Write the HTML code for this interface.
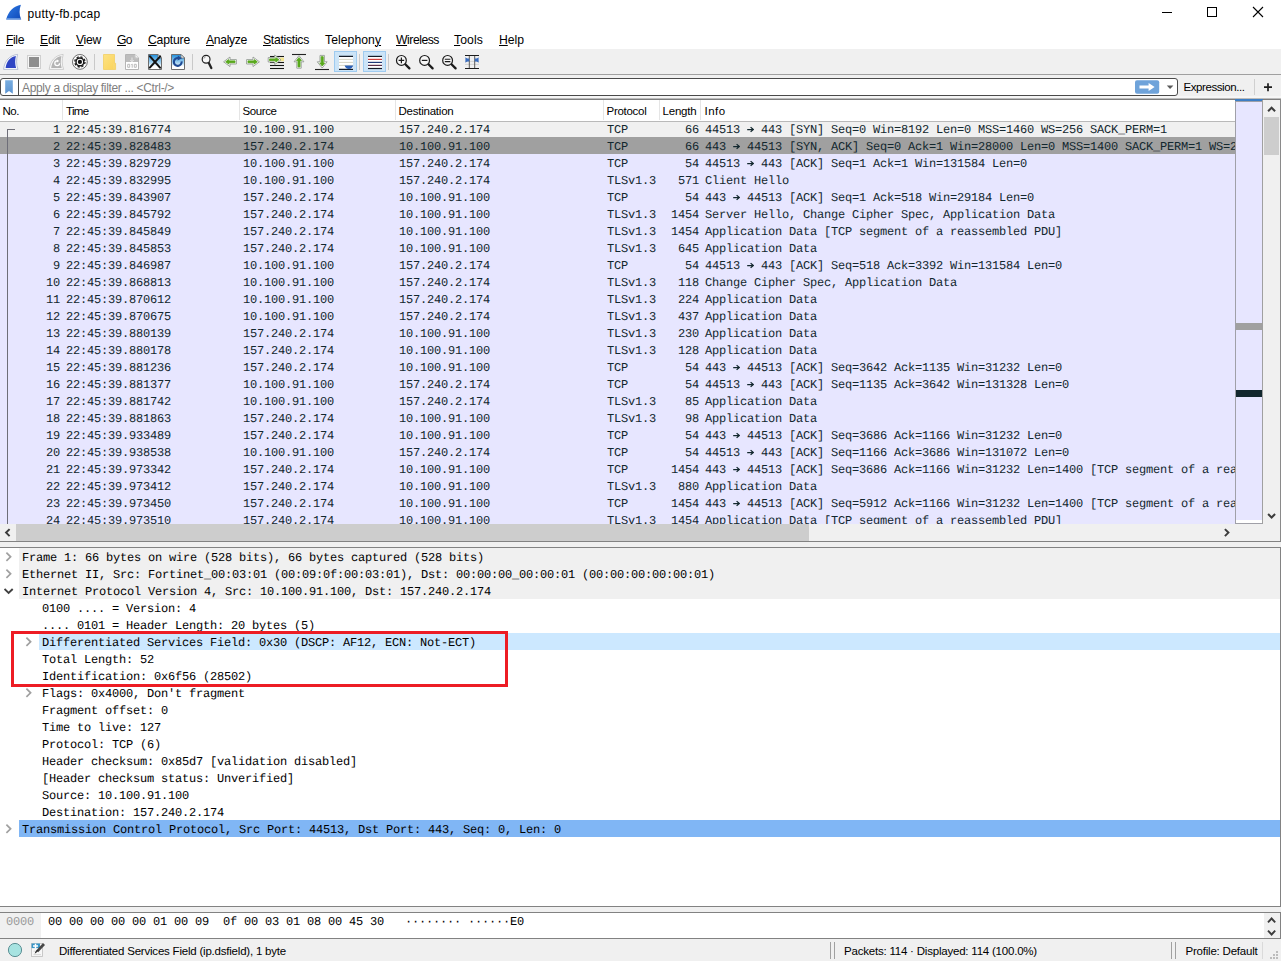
<!DOCTYPE html>
<html><head><meta charset="utf-8"><title>putty-fb.pcap</title><style>
html,body{margin:0;padding:0;background:#fff;}
body{width:1281px;height:961px;position:relative;overflow:hidden;font-family:"Liberation Sans",sans-serif;}
div,svg.a,span.c{position:absolute;}
.t{white-space:pre;font-family:"Liberation Sans",sans-serif;}
.t u{text-decoration:underline;text-underline-offset:1px;}
.r{left:0;width:1236px;height:17px;font-family:"Liberation Mono",monospace;font-size:12px;letter-spacing:-0.2px;line-height:16px;text-rendering:geometricPrecision;color:#12272e;white-space:pre;}
.r.sel{background:#f0f0f0;}
.r.syn{background:#a0a0a0;}
.c{top:2px;white-space:pre;}
.ar{display:inline-block;vertical-align:top;letter-spacing:0;margin-right:0;}
.m{font-family:"Liberation Mono",monospace;font-size:12px;letter-spacing:-0.2px;line-height:16px;height:16px;text-rendering:geometricPrecision;color:#000;white-space:pre;}
</style></head><body>
<div style="left:0px;top:0px;width:1281px;height:27px;background:#fff;"></div>
<div class="t" style="left:27.5px;top:5.5px;line-height:16px;font-size:12px;color:#000;letter-spacing:0.279px;">putty-fb.pcap</div>
<svg class="a" style="left:1160px;top:4px" width="110" height="18" viewBox="0 0 110 18"><path d="M2 8.5H12" stroke="#000" stroke-width="1"/><rect x="47.5" y="3.5" width="9" height="9" fill="none" stroke="#000" stroke-width="1"/><path d="M93 3L103 13M103 3L93 13" stroke="#000" stroke-width="1.1"/></svg>
<svg class="a" style="left:4px;top:3px" width="20" height="19" viewBox="4 3 20 19"><defs><linearGradient id="gfin" x1="0" y1="0" x2="1" y2="1"><stop offset="0" stop-color="#2e7be6"/><stop offset="1" stop-color="#0f49b8"/></linearGradient></defs><path d="M20.9 4.8C13.8 6.2 8.2 11.3 6.2 19.6H21.2C19 14.6 19.2 9.4 20.9 4.8Z" fill="url(#gfin)"/><path d="M6.6 18.2L6.2 19.6H21.2L20.6 18.2Z" fill="#7aa6e4"/></svg>
<div style="left:0px;top:27px;width:1281px;height:22px;background:#fff;"></div>
<div class="t" style="left:6px;top:31.5px;line-height:16px;font-size:12.2px;color:#000;letter-spacing:-0.410px;"><u>F</u>ile</div>
<div class="t" style="left:40px;top:31.5px;line-height:16px;font-size:12.2px;color:#000;letter-spacing:-0.254px;"><u>E</u>dit</div>
<div class="t" style="left:76px;top:31.5px;line-height:16px;font-size:12.2px;color:#000;letter-spacing:-0.301px;"><u>V</u>iew</div>
<div class="t" style="left:117px;top:31.5px;line-height:16px;font-size:12.2px;color:#000;letter-spacing:-0.633px;"><u>G</u>o</div>
<div class="t" style="left:148px;top:31.5px;line-height:16px;font-size:12.2px;color:#000;letter-spacing:-0.194px;"><u>C</u>apture</div>
<div class="t" style="left:206px;top:31.5px;line-height:16px;font-size:12.2px;color:#000;letter-spacing:-0.337px;"><u>A</u>nalyze</div>
<div class="t" style="left:263px;top:31.5px;line-height:16px;font-size:12.2px;color:#000;letter-spacing:-0.277px;"><u>S</u>tatistics</div>
<div class="t" style="left:325px;top:31.5px;line-height:16px;font-size:12.2px;color:#000;letter-spacing:0.049px;">Telephon<u>y</u></div>
<div class="t" style="left:396px;top:31.5px;line-height:16px;font-size:12.2px;color:#000;letter-spacing:-0.467px;"><u>W</u>ireless</div>
<div class="t" style="left:454px;top:31.5px;line-height:16px;font-size:12.2px;color:#000;letter-spacing:0.109px;"><u>T</u>ools</div>
<div class="t" style="left:499px;top:31.5px;line-height:16px;font-size:12.2px;color:#000;letter-spacing:-0.020px;"><u>H</u>elp</div>
<div style="left:0px;top:49px;width:1281px;height:25px;background:#f0f0f0;"></div>
<div style="left:0px;top:74px;width:1281px;height:1px;background:#a0a0a0;"></div>
<div style="left:0px;top:75px;width:1281px;height:23px;background:#f0f0f0;"></div>
<svg class="a" style="left:0;top:50px" width="500" height="25" viewBox="0 50 500 25"><defs><linearGradient id="gsky" x1="0" y1="0" x2="0" y2="1"><stop offset="0" stop-color="#1d8ddb"/><stop offset="0.6" stop-color="#b5dbf3"/><stop offset="0.78" stop-color="#fff"/></linearGradient><linearGradient id="ggrn" x1="0" y1="0" x2="0" y2="1"><stop offset="0" stop-color="#7cc23a"/><stop offset="1" stop-color="#3f8f0c"/></linearGradient><linearGradient id="gfld" x1="0" y1="0" x2="1" y2="1"><stop offset="0" stop-color="#fde283"/><stop offset="1" stop-color="#fad35a"/></linearGradient></defs><rect x="334.5" y="51.5" width="22" height="20" fill="#cce4f7" stroke="#9fcbf0"/><rect x="363.5" y="51.5" width="22" height="20" fill="#cce4f7" stroke="#9fcbf0"/><path d="M94.5 54V70" stroke="#c9c9c9" stroke-width="1"/><path d="M192.5 54V70" stroke="#c9c9c9" stroke-width="1"/><path d="M359.5 54V70" stroke="#c9c9c9" stroke-width="1"/><path d="M388.5 54V70" stroke="#c9c9c9" stroke-width="1"/><path d="M17.6 54.4C9.6 55.2 4.4 61 3.6 69.4H18C16.2 64.6 16.2 59.4 17.6 54.4Z" fill="#fbfcff" stroke="#aab2cc" stroke-width="0.8"/><path d="M15.9 56C10.4 56.9 6.4 61.4 5.6 68H16.1C14.9 64 14.9 60 15.9 56Z" fill="#2f45c4"/><rect x="27.5" y="55.5" width="13" height="13" fill="#f6f6f6" stroke="#cfcfcf"/><rect x="29" y="57" width="10" height="10" fill="#8e8e8e"/><g transform="translate(45.6 0)"><path d="M17.6 54.4C9.6 55.2 4.4 61 3.6 69.4H18C16.2 64.6 16.2 59.4 17.6 54.4Z" fill="#f8f8f8" stroke="#c4c4c4" stroke-width="0.8"/><path d="M15.9 56C10.4 56.9 6.4 61.4 5.6 68H16.1C14.9 64 14.9 60 15.9 56Z" fill="#b4b4b4"/><path d="M14 63.3A2.4 2.4 0 1 1 11.6 60.9" fill="none" stroke="#fff" stroke-width="1.3"/><path d="M11.2 59.3L13.6 60.9L11.2 62.5Z" fill="#fff"/></g><circle cx="79.9" cy="61.9" r="7.4" fill="#fff" stroke="#4a4a4a" stroke-width="0.8"/><circle cx="79.9" cy="61.9" r="5.1" fill="none" stroke="#1a1a1a" stroke-width="1.3" stroke-dasharray="2.2 1.8"/><circle cx="79.9" cy="61.9" r="3.9" fill="#fff" stroke="#1a1a1a" stroke-width="1.5"/><circle cx="79.9" cy="61.9" r="2.1" fill="#111"/><path d="M103.5 54.5H114.5V63.3H115.6V69.5H103.5Z" fill="url(#gfld)" stroke="#f3cf63" stroke-width="0.8"/><path d="M114 63.5V69.3" stroke="#f6dc86" stroke-width="0.8"/><path d="M125.5 54.5H135L138.5 58V69.5H125.5Z" fill="#fff" stroke="#b5b5b5"/><path d="M126 55H134.8V58.2H138V62H126Z" fill="#bdbdbd"/><path d="M135 54.5V58H138.5" fill="#f4f4f4" stroke="#b5b5b5" stroke-width="0.8"/><path d="M132 57.5V61.5M130.3 60L132 61.8L133.7 60" stroke="#e8e8e8" stroke-width="1" fill="none"/><path d="M127.7 64.3H129.7V67.3H127.7ZM134.3 64.3H136.3V67.3H134.3Z" fill="none" stroke="#b4b4b4" stroke-width="0.9"/><path d="M131.3 64.6L132.2 64V67.8" fill="none" stroke="#b4b4b4" stroke-width="0.9"/><path d="M148.5 54.5H158L161.5 58V69.5H148.5Z" fill="url(#gsky)" stroke="#6d6d6d"/><path d="M158 54.5V58H161.5Z" fill="#fff" stroke="#6d6d6d" stroke-width="0.8"/><path d="M150 56.4L160 67.6M160.2 56.4L149.8 67.6" stroke="#141414" stroke-width="2.1" stroke-linecap="round"/><path d="M171.5 54.5H181L184.5 58V69.5H171.5Z" fill="url(#gsky)" stroke="#6d6d6d"/><path d="M181 54.5V58H184.5Z" fill="#fff" stroke="#6d6d6d" stroke-width="0.8"/><path d="M181.6 61.3A3.9 3.9 0 1 1 178.4 58.1" fill="none" stroke="#1e4a94" stroke-width="2.1"/><path d="M177.8 55.6L182 58.3L177.6 60.6Z" fill="#1e4a94"/><path d="M208.6 62.6L211.3 68" stroke="#222" stroke-width="2.3" stroke-linecap="round"/><circle cx="206.1" cy="59.2" r="3.9" fill="#f8f8f8" stroke="#222" stroke-width="1.2"/><path d="M203.9 58.6A2.3 2.3 0 0 1 205.6 56.9" stroke="#777" stroke-width="0.8" fill="none"/><g transform="translate(237 0) scale(-1 1)"><path d="M0.6 59.6H7V57L13.4 61.8L7 66.6V64H0.6Z" fill="#ffffff" stroke="#8e968e" stroke-width="0.85" stroke-linejoin="round"/><path d="M2 60.9H8.2V59.6L11.3 61.8L8.2 64V62.7H2Z" fill="#58a81c" stroke="#58a81c" stroke-width="0.9" stroke-linejoin="round"/></g><g transform="translate(246 0)"><path d="M0.6 59.6H7V57L13.4 61.8L7 66.6V64H0.6Z" fill="#ffffff" stroke="#8e968e" stroke-width="0.85" stroke-linejoin="round"/><path d="M2 60.9H8.2V59.6L11.3 61.8L8.2 64V62.7H2Z" fill="#58a81c" stroke="#58a81c" stroke-width="0.9" stroke-linejoin="round"/></g><path d="M270 56.5H284" stroke="#161616" stroke-width="1.1"/><path d="M270 59.5H284" stroke="#161616" stroke-width="1.1"/><path d="M270 62.5H284" stroke="#161616" stroke-width="1.1"/><path d="M270 65.5H284" stroke="#161616" stroke-width="1.1"/><path d="M270 68.5H284" stroke="#161616" stroke-width="1.1"/><rect x="280" y="57.6" width="4" height="3.6" fill="#f3e68f"/><g transform="translate(267.6 -2)"><g transform="translate(0 0)"><path d="M0.6 59.6H7V57L13.4 61.8L7 66.6V64H0.6Z" fill="#ffffff" stroke="#8e968e" stroke-width="0.85" stroke-linejoin="round"/><path d="M2 60.9H8.2V59.6L11.3 61.8L8.2 64V62.7H2Z" fill="#58a81c" stroke="#58a81c" stroke-width="0.9" stroke-linejoin="round"/></g></g><path d="M292 54.5H306" stroke="#222" stroke-width="1.1"/><g transform="translate(299 55.2)"><path d="M-2.2 13H2.2V6.6H4.9L0 0.4L-4.9 6.6H-2.2Z" fill="#ffffff" stroke="#8e968e" stroke-width="0.85" stroke-linejoin="round"/><path d="M-1 11.7H1V5.4H2.4L0 2.4L-2.4 5.4H-1Z" fill="#58a81c" stroke="#58a81c" stroke-width="0.9" stroke-linejoin="round"/></g><path d="M315 69.5H329" stroke="#222" stroke-width="1.1"/><g transform="translate(322.2 68.4) scale(1 -1)"><path d="M-2.2 13H2.2V6.6H4.9L0 0.4L-4.9 6.6H-2.2Z" fill="#ffffff" stroke="#8e968e" stroke-width="0.85" stroke-linejoin="round"/><path d="M-1 11.7H1V5.4H2.4L0 2.4L-2.4 5.4H-1Z" fill="#58a81c" stroke="#58a81c" stroke-width="0.9" stroke-linejoin="round"/></g><rect x="339" y="56" width="14" height="13.5" fill="#fff"/><path d="M339 59.4H353" stroke="#d6d4c4" stroke-width="1"/><path d="M339 62.4H353" stroke="#d6d4c4" stroke-width="1"/><path d="M339 65.4H353" stroke="#d6d4c4" stroke-width="1"/><path d="M339 56.4H353M339 69.4H353" stroke="#141c28" stroke-width="1.2"/><path d="M344.6 65.4H353.2C352.6 67.6 351 68.9 348.9 68.9C346.8 68.9 345.2 67.6 344.6 65.4Z" fill="#2c60b6"/><rect x="368" y="56" width="14" height="13" fill="#fff"/><path d="M368 56.4H382" stroke="#141c28" stroke-width="1.2"/><path d="M368 59.4H382" stroke="#d2403c" stroke-width="1.2"/><path d="M368 62.4H382" stroke="#1f3a78" stroke-width="1.2"/><path d="M368 65.4H382" stroke="#5a2f4a" stroke-width="1.2"/><path d="M368 68.5H382" stroke="#141c28" stroke-width="1.2"/><path d="M405.3 64.3L409.4 68.4" stroke="#1a1a1a" stroke-width="2.3" stroke-linecap="round"/><circle cx="401.4" cy="60.4" r="4.9" fill="#f6f6f6" stroke="#1a1a1a" stroke-width="1.2"/><path d="M398.6 60.4H404.2M401.4 57.6V63.2" stroke="#1a1a1a" stroke-width="1.2"/><path d="M428.5 64.3L432.6 68.4" stroke="#1a1a1a" stroke-width="2.3" stroke-linecap="round"/><circle cx="424.6" cy="60.4" r="4.9" fill="#f6f6f6" stroke="#1a1a1a" stroke-width="1.2"/><path d="M421.8 60.4H427.4" stroke="#1a1a1a" stroke-width="1.2"/><path d="M451.5 64.3L455.6 68.4" stroke="#1a1a1a" stroke-width="2.3" stroke-linecap="round"/><circle cx="447.6" cy="60.4" r="4.9" fill="#f6f6f6" stroke="#1a1a1a" stroke-width="1.2"/><path d="M444.8 59.3H450.4M444.8 61.6H450.4" stroke="#1a1a1a" stroke-width="1.1"/><path d="M465 61.4H479M465 64.4H479" stroke="#d0d0d0" stroke-width="0.9"/><path d="M469.3 55.5V68.5M474.7 55.5V68.5" stroke="#5a5a5a" stroke-width="1"/><path d="M465 55.5H479M465 68.5H479" stroke="#1c1c1c" stroke-width="1.2"/><path d="M465.4 57.2L468.8 60L465.4 62.8ZM478.6 57.2L475.2 60L478.6 62.8Z" fill="#3a6ec0"/><path d="M466 58.6H469.2V61.4H466ZM478 58.6H474.8V61.4H478Z" fill="#3a6ec0"/></svg>
<div style="left:0px;top:78px;width:1178px;height:18px;background:#fff;border:1px solid #4a4a4a;border-radius:3px;box-sizing:border-box;"></div>
<div style="left:18px;top:79px;width:1px;height:16px;background:#4a4a4a;"></div>
<svg class="a" style="left:4px;top:79px" width="11" height="16" viewBox="4 79 11 16"><defs><linearGradient id="gbm" x1="0" y1="0" x2="0" y2="1"><stop offset="0" stop-color="#7aaee0"/><stop offset="1" stop-color="#5b94d2"/></linearGradient></defs><path d="M5.2 80.2H12.8V93.8L9 91L5.2 93.8Z" fill="url(#gbm)"/></svg>
<svg class="a" style="left:1134px;top:79px" width="44" height="16" viewBox="1134 79 44 16"><rect x="1135" y="80.2" width="24.2" height="13.6" rx="2" fill="#6fa3da"/><path d="M1139.5 85.6H1148.6V83L1154.6 87L1148.6 91V88.4H1139.5Z" fill="#fff"/><path d="M1166.8 85.4H1173.4L1170.1 88.9Z" fill="#5a5a5a"/></svg>
<div class="t" style="left:22px;top:80px;line-height:16px;font-size:12px;color:#7f7f7f;letter-spacing:-0.326px;">Apply a display filter ... &lt;Ctrl-/&gt;</div>
<div class="t" style="left:1183.5px;top:79px;line-height:16px;font-size:11.5px;color:#000;letter-spacing:-0.422px;">Expression...</div>
<div style="left:1254px;top:79px;width:1px;height:16px;background:#d0d0d0;"></div>
<svg class="a" style="left:1262px;top:82px" width="12" height="11" viewBox="0 0 12 11"><path d="M2 5.2H10M6 1.2V9.2" stroke="#1e1e1e" stroke-width="1.7"/></svg>
<div style="left:0px;top:96px;width:1281px;height:2px;background:#f6f6f6;"></div>
<div style="left:0px;top:98px;width:1281px;height:1px;background:#bcbcbc;"></div>
<div style="left:0px;top:99px;width:1281px;height:1px;background:#7e7e7e;"></div>
<div style="left:0px;top:100px;width:1281px;height:21px;background:#fff;"></div>
<div class="t" style="left:2.5px;top:103px;line-height:16px;font-size:11.5px;color:#000;letter-spacing:-0.469px;">No.</div>
<div class="t" style="left:66px;top:103px;line-height:16px;font-size:11.5px;color:#000;letter-spacing:-0.660px;">Time</div>
<div class="t" style="left:242.5px;top:103px;line-height:16px;font-size:11.5px;color:#000;letter-spacing:-0.406px;">Source</div>
<div class="t" style="left:398.5px;top:103px;line-height:16px;font-size:11.5px;color:#000;letter-spacing:-0.232px;">Destination</div>
<div class="t" style="left:606.5px;top:103px;line-height:16px;font-size:11.5px;color:#000;letter-spacing:-0.273px;">Protocol</div>
<div class="t" style="left:662.5px;top:103px;line-height:16px;font-size:11.5px;color:#000;letter-spacing:-0.198px;">Length</div>
<div class="t" style="left:704.5px;top:103px;line-height:16px;font-size:11.5px;color:#000;letter-spacing:0.453px;">Info</div>
<div style="left:62px;top:100px;width:1px;height:21px;background:#e5e5e5;"></div>
<div style="left:239px;top:100px;width:1px;height:21px;background:#e5e5e5;"></div>
<div style="left:395px;top:100px;width:1px;height:21px;background:#e5e5e5;"></div>
<div style="left:603px;top:100px;width:1px;height:21px;background:#e5e5e5;"></div>
<div style="left:659px;top:100px;width:1px;height:21px;background:#e5e5e5;"></div>
<div style="left:700px;top:100px;width:1px;height:21px;background:#e5e5e5;"></div>
<div class="a" style="left:0;top:120px;width:1235px;height:404px;overflow:hidden;background:#e7e6ff">
<div class="r sel" style="top:0px"><span class="c" style="right:1176px">1</span><span class="c" style="left:66px">22:45:39.816774</span><span class="c" style="left:243px">10.100.91.100</span><span class="c" style="left:399px">157.240.2.174</span><span class="c" style="left:607px">TCP</span><span class="c" style="right:537px">66</span><span class="c" style="left:705px">44513 <svg class="ar" width="7" height="16" viewBox="0 0 7 16"><path d="M0.2 7.5H6.2M3.6 5.1L6.3 7.5L3.6 9.9" fill="none" stroke="currentColor" stroke-width="1.25"/></svg> 443 [SYN] Seq=0 Win=8192 Len=0 MSS=1460 WS=256 SACK_PERM=1</span></div>
<div class="r syn" style="top:17px"><span class="c" style="right:1176px">2</span><span class="c" style="left:66px">22:45:39.828483</span><span class="c" style="left:243px">157.240.2.174</span><span class="c" style="left:399px">10.100.91.100</span><span class="c" style="left:607px">TCP</span><span class="c" style="right:537px">66</span><span class="c" style="left:705px">443 <svg class="ar" width="7" height="16" viewBox="0 0 7 16"><path d="M0.2 7.5H6.2M3.6 5.1L6.3 7.5L3.6 9.9" fill="none" stroke="currentColor" stroke-width="1.25"/></svg> 44513 [SYN, ACK] Seq=0 Ack=1 Win=28000 Len=0 MSS=1400 SACK_PERM=1 WS=256</span></div>
<div class="r" style="top:34px"><span class="c" style="right:1176px">3</span><span class="c" style="left:66px">22:45:39.829729</span><span class="c" style="left:243px">10.100.91.100</span><span class="c" style="left:399px">157.240.2.174</span><span class="c" style="left:607px">TCP</span><span class="c" style="right:537px">54</span><span class="c" style="left:705px">44513 <svg class="ar" width="7" height="16" viewBox="0 0 7 16"><path d="M0.2 7.5H6.2M3.6 5.1L6.3 7.5L3.6 9.9" fill="none" stroke="currentColor" stroke-width="1.25"/></svg> 443 [ACK] Seq=1 Ack=1 Win=131584 Len=0</span></div>
<div class="r" style="top:51px"><span class="c" style="right:1176px">4</span><span class="c" style="left:66px">22:45:39.832995</span><span class="c" style="left:243px">10.100.91.100</span><span class="c" style="left:399px">157.240.2.174</span><span class="c" style="left:607px">TLSv1.3</span><span class="c" style="right:537px">571</span><span class="c" style="left:705px">Client Hello</span></div>
<div class="r" style="top:68px"><span class="c" style="right:1176px">5</span><span class="c" style="left:66px">22:45:39.843907</span><span class="c" style="left:243px">157.240.2.174</span><span class="c" style="left:399px">10.100.91.100</span><span class="c" style="left:607px">TCP</span><span class="c" style="right:537px">54</span><span class="c" style="left:705px">443 <svg class="ar" width="7" height="16" viewBox="0 0 7 16"><path d="M0.2 7.5H6.2M3.6 5.1L6.3 7.5L3.6 9.9" fill="none" stroke="currentColor" stroke-width="1.25"/></svg> 44513 [ACK] Seq=1 Ack=518 Win=29184 Len=0</span></div>
<div class="r" style="top:85px"><span class="c" style="right:1176px">6</span><span class="c" style="left:66px">22:45:39.845792</span><span class="c" style="left:243px">157.240.2.174</span><span class="c" style="left:399px">10.100.91.100</span><span class="c" style="left:607px">TLSv1.3</span><span class="c" style="right:537px">1454</span><span class="c" style="left:705px">Server Hello, Change Cipher Spec, Application Data</span></div>
<div class="r" style="top:102px"><span class="c" style="right:1176px">7</span><span class="c" style="left:66px">22:45:39.845849</span><span class="c" style="left:243px">157.240.2.174</span><span class="c" style="left:399px">10.100.91.100</span><span class="c" style="left:607px">TLSv1.3</span><span class="c" style="right:537px">1454</span><span class="c" style="left:705px">Application Data [TCP segment of a reassembled PDU]</span></div>
<div class="r" style="top:119px"><span class="c" style="right:1176px">8</span><span class="c" style="left:66px">22:45:39.845853</span><span class="c" style="left:243px">157.240.2.174</span><span class="c" style="left:399px">10.100.91.100</span><span class="c" style="left:607px">TLSv1.3</span><span class="c" style="right:537px">645</span><span class="c" style="left:705px">Application Data</span></div>
<div class="r" style="top:136px"><span class="c" style="right:1176px">9</span><span class="c" style="left:66px">22:45:39.846987</span><span class="c" style="left:243px">10.100.91.100</span><span class="c" style="left:399px">157.240.2.174</span><span class="c" style="left:607px">TCP</span><span class="c" style="right:537px">54</span><span class="c" style="left:705px">44513 <svg class="ar" width="7" height="16" viewBox="0 0 7 16"><path d="M0.2 7.5H6.2M3.6 5.1L6.3 7.5L3.6 9.9" fill="none" stroke="currentColor" stroke-width="1.25"/></svg> 443 [ACK] Seq=518 Ack=3392 Win=131584 Len=0</span></div>
<div class="r" style="top:153px"><span class="c" style="right:1176px">10</span><span class="c" style="left:66px">22:45:39.868813</span><span class="c" style="left:243px">10.100.91.100</span><span class="c" style="left:399px">157.240.2.174</span><span class="c" style="left:607px">TLSv1.3</span><span class="c" style="right:537px">118</span><span class="c" style="left:705px">Change Cipher Spec, Application Data</span></div>
<div class="r" style="top:170px"><span class="c" style="right:1176px">11</span><span class="c" style="left:66px">22:45:39.870612</span><span class="c" style="left:243px">10.100.91.100</span><span class="c" style="left:399px">157.240.2.174</span><span class="c" style="left:607px">TLSv1.3</span><span class="c" style="right:537px">224</span><span class="c" style="left:705px">Application Data</span></div>
<div class="r" style="top:187px"><span class="c" style="right:1176px">12</span><span class="c" style="left:66px">22:45:39.870675</span><span class="c" style="left:243px">10.100.91.100</span><span class="c" style="left:399px">157.240.2.174</span><span class="c" style="left:607px">TLSv1.3</span><span class="c" style="right:537px">437</span><span class="c" style="left:705px">Application Data</span></div>
<div class="r" style="top:204px"><span class="c" style="right:1176px">13</span><span class="c" style="left:66px">22:45:39.880139</span><span class="c" style="left:243px">157.240.2.174</span><span class="c" style="left:399px">10.100.91.100</span><span class="c" style="left:607px">TLSv1.3</span><span class="c" style="right:537px">230</span><span class="c" style="left:705px">Application Data</span></div>
<div class="r" style="top:221px"><span class="c" style="right:1176px">14</span><span class="c" style="left:66px">22:45:39.880178</span><span class="c" style="left:243px">157.240.2.174</span><span class="c" style="left:399px">10.100.91.100</span><span class="c" style="left:607px">TLSv1.3</span><span class="c" style="right:537px">128</span><span class="c" style="left:705px">Application Data</span></div>
<div class="r" style="top:238px"><span class="c" style="right:1176px">15</span><span class="c" style="left:66px">22:45:39.881236</span><span class="c" style="left:243px">157.240.2.174</span><span class="c" style="left:399px">10.100.91.100</span><span class="c" style="left:607px">TCP</span><span class="c" style="right:537px">54</span><span class="c" style="left:705px">443 <svg class="ar" width="7" height="16" viewBox="0 0 7 16"><path d="M0.2 7.5H6.2M3.6 5.1L6.3 7.5L3.6 9.9" fill="none" stroke="currentColor" stroke-width="1.25"/></svg> 44513 [ACK] Seq=3642 Ack=1135 Win=31232 Len=0</span></div>
<div class="r" style="top:255px"><span class="c" style="right:1176px">16</span><span class="c" style="left:66px">22:45:39.881377</span><span class="c" style="left:243px">10.100.91.100</span><span class="c" style="left:399px">157.240.2.174</span><span class="c" style="left:607px">TCP</span><span class="c" style="right:537px">54</span><span class="c" style="left:705px">44513 <svg class="ar" width="7" height="16" viewBox="0 0 7 16"><path d="M0.2 7.5H6.2M3.6 5.1L6.3 7.5L3.6 9.9" fill="none" stroke="currentColor" stroke-width="1.25"/></svg> 443 [ACK] Seq=1135 Ack=3642 Win=131328 Len=0</span></div>
<div class="r" style="top:272px"><span class="c" style="right:1176px">17</span><span class="c" style="left:66px">22:45:39.881742</span><span class="c" style="left:243px">10.100.91.100</span><span class="c" style="left:399px">157.240.2.174</span><span class="c" style="left:607px">TLSv1.3</span><span class="c" style="right:537px">85</span><span class="c" style="left:705px">Application Data</span></div>
<div class="r" style="top:289px"><span class="c" style="right:1176px">18</span><span class="c" style="left:66px">22:45:39.881863</span><span class="c" style="left:243px">157.240.2.174</span><span class="c" style="left:399px">10.100.91.100</span><span class="c" style="left:607px">TLSv1.3</span><span class="c" style="right:537px">98</span><span class="c" style="left:705px">Application Data</span></div>
<div class="r" style="top:306px"><span class="c" style="right:1176px">19</span><span class="c" style="left:66px">22:45:39.933489</span><span class="c" style="left:243px">157.240.2.174</span><span class="c" style="left:399px">10.100.91.100</span><span class="c" style="left:607px">TCP</span><span class="c" style="right:537px">54</span><span class="c" style="left:705px">443 <svg class="ar" width="7" height="16" viewBox="0 0 7 16"><path d="M0.2 7.5H6.2M3.6 5.1L6.3 7.5L3.6 9.9" fill="none" stroke="currentColor" stroke-width="1.25"/></svg> 44513 [ACK] Seq=3686 Ack=1166 Win=31232 Len=0</span></div>
<div class="r" style="top:323px"><span class="c" style="right:1176px">20</span><span class="c" style="left:66px">22:45:39.938538</span><span class="c" style="left:243px">10.100.91.100</span><span class="c" style="left:399px">157.240.2.174</span><span class="c" style="left:607px">TCP</span><span class="c" style="right:537px">54</span><span class="c" style="left:705px">44513 <svg class="ar" width="7" height="16" viewBox="0 0 7 16"><path d="M0.2 7.5H6.2M3.6 5.1L6.3 7.5L3.6 9.9" fill="none" stroke="currentColor" stroke-width="1.25"/></svg> 443 [ACK] Seq=1166 Ack=3686 Win=131072 Len=0</span></div>
<div class="r" style="top:340px"><span class="c" style="right:1176px">21</span><span class="c" style="left:66px">22:45:39.973342</span><span class="c" style="left:243px">157.240.2.174</span><span class="c" style="left:399px">10.100.91.100</span><span class="c" style="left:607px">TCP</span><span class="c" style="right:537px">1454</span><span class="c" style="left:705px">443 <svg class="ar" width="7" height="16" viewBox="0 0 7 16"><path d="M0.2 7.5H6.2M3.6 5.1L6.3 7.5L3.6 9.9" fill="none" stroke="currentColor" stroke-width="1.25"/></svg> 44513 [ACK] Seq=3686 Ack=1166 Win=31232 Len=1400 [TCP segment of a reassembled PDU]</span></div>
<div class="r" style="top:357px"><span class="c" style="right:1176px">22</span><span class="c" style="left:66px">22:45:39.973412</span><span class="c" style="left:243px">157.240.2.174</span><span class="c" style="left:399px">10.100.91.100</span><span class="c" style="left:607px">TLSv1.3</span><span class="c" style="right:537px">880</span><span class="c" style="left:705px">Application Data</span></div>
<div class="r" style="top:374px"><span class="c" style="right:1176px">23</span><span class="c" style="left:66px">22:45:39.973450</span><span class="c" style="left:243px">157.240.2.174</span><span class="c" style="left:399px">10.100.91.100</span><span class="c" style="left:607px">TCP</span><span class="c" style="right:537px">1454</span><span class="c" style="left:705px">443 <svg class="ar" width="7" height="16" viewBox="0 0 7 16"><path d="M0.2 7.5H6.2M3.6 5.1L6.3 7.5L3.6 9.9" fill="none" stroke="currentColor" stroke-width="1.25"/></svg> 44513 [ACK] Seq=5912 Ack=1166 Win=31232 Len=1400 [TCP segment of a reassembled PDU]</span></div>
<div class="r" style="top:391px"><span class="c" style="right:1176px">24</span><span class="c" style="left:66px">22:45:39.973510</span><span class="c" style="left:243px">157.240.2.174</span><span class="c" style="left:399px">10.100.91.100</span><span class="c" style="left:607px">TLSv1.3</span><span class="c" style="right:537px">1454</span><span class="c" style="left:705px">Application Data [TCP segment of a reassembled PDU]</span></div>
<div class="a" style="left:7px;top:9px;width:1px;height:400px;background:#6e6e78"></div>
<div class="a" style="left:7px;top:9px;width:8px;height:1px;background:#6e6e78"></div>
</div>
<div style="left:0px;top:120px;width:1235px;height:1px;background:#fff;"></div>
<div style="left:0px;top:121px;width:1235px;height:1px;background:#b9b9b9;"></div>
<div style="left:1235px;top:100px;width:28px;height:424px;background:#e7e6ff;border-left:1px solid #a0a0a8;box-sizing:border-box;"></div>
<div style="left:1235px;top:99px;width:28px;height:2px;background:#3d7ec4;"></div>
<div style="left:1235px;top:101px;width:28px;height:1px;background:#9ea0a8;"></div>
<div style="left:1236px;top:323px;width:26px;height:7px;background:#a0a0a0;"></div>
<div style="left:1236px;top:390px;width:26px;height:7px;background:#12272e;"></div>
<div style="left:1236px;top:520px;width:26px;height:3px;background:#fff;"></div>
<div style="left:1236px;top:523px;width:27px;height:1px;background:#a0a0a8;"></div>
<div style="left:1262px;top:100px;width:1px;height:424px;background:#a0a0a0;"></div>
<div style="left:1236px;top:524px;width:45px;height:18px;background:#f0f0f0;"></div>
<div style="left:1263px;top:100px;width:18px;height:424px;background:#f0f0f0;"></div>
<div style="left:1264px;top:117px;width:15px;height:38px;background:#cdcdcd;"></div>
<div style="left:1280px;top:99px;width:1px;height:443px;background:#8a8a8a;"></div>
<svg class="a" style="left:1264px;top:100px" width="17" height="424" viewBox="0 0 17 424"><path d="M4.1 11.2L7.6 7.7L11.1 11.2" fill="none" stroke="#3c3c3c" stroke-width="2"/><path d="M4.1 414L7.6 417.5L11.1 414" fill="none" stroke="#3c3c3c" stroke-width="2"/></svg>
<div style="left:0px;top:524px;width:1236px;height:17px;background:#f0f0f0;"></div>
<div style="left:16px;top:524px;width:793px;height:17px;background:#cdcdcd;"></div>
<svg class="a" style="left:0;top:524px" width="1236" height="17" viewBox="0 0 1236 17"><path d="M9.6 5.1L6.1 8.6L9.6 12.1" fill="none" stroke="#3c3c3c" stroke-width="2"/><path d="M1224.9 5.1L1228.4 8.6L1224.9 12.1" fill="none" stroke="#3c3c3c" stroke-width="2"/></svg>
<div style="left:0px;top:541px;width:1281px;height:1px;background:#828282;"></div>
<div style="left:0px;top:542px;width:1281px;height:5px;background:#f0f0f0;"></div>
<div style="left:0px;top:547px;width:1281px;height:1px;background:#828282;"></div>
<div style="left:0px;top:548px;width:1280px;height:358px;background:#fff;"></div>
<div style="left:1280px;top:548px;width:1px;height:358px;background:#828282;"></div>
<div style="left:19px;top:548px;width:1261px;height:17px;background:#f0f0f0;"></div>
<div class="m" style="left:22px;top:550px">Frame 1: 66 bytes on wire (528 bits), 66 bytes captured (528 bits)</div>
<svg class="a" style="left:4px;top:548px" width="10" height="17" viewBox="0 0 10 17"><path d="M2.4 4.7L6.6 8.8L2.4 12.9" fill="none" stroke="#a0a0a0" stroke-width="1.7"/></svg>
<div style="left:19px;top:565px;width:1261px;height:17px;background:#f0f0f0;"></div>
<div class="m" style="left:22px;top:567px">Ethernet II, Src: Fortinet_00:03:01 (00:09:0f:00:03:01), Dst: 00:00:00_00:00:01 (00:00:00:00:00:01)</div>
<svg class="a" style="left:4px;top:565px" width="10" height="17" viewBox="0 0 10 17"><path d="M2.4 4.7L6.6 8.8L2.4 12.9" fill="none" stroke="#a0a0a0" stroke-width="1.7"/></svg>
<div style="left:19px;top:582px;width:1261px;height:17px;background:#f0f0f0;"></div>
<div class="m" style="left:22px;top:584px">Internet Protocol Version 4, Src: 10.100.91.100, Dst: 157.240.2.174</div>
<svg class="a" style="left:4px;top:582px" width="12" height="17" viewBox="0 0 12 17"><path d="M0.5 7L4.6 11L8.7 7" fill="none" stroke="#404040" stroke-width="1.9"/></svg>
<div class="m" style="left:42px;top:601px">0100 .... = Version: 4</div>
<div class="m" style="left:42px;top:618px">.... 0101 = Header Length: 20 bytes (5)</div>
<div style="left:39px;top:633px;width:1241px;height:17px;background:#cce8ff;"></div>
<div class="m" style="left:42px;top:635px">Differentiated Services Field: 0x30 (DSCP: AF12, ECN: Not-ECT)</div>
<svg class="a" style="left:24px;top:633px" width="10" height="17" viewBox="0 0 10 17"><path d="M2.4 4.7L6.6 8.8L2.4 12.9" fill="none" stroke="#a0a0a0" stroke-width="1.7"/></svg>
<div class="m" style="left:42px;top:652px">Total Length: 52</div>
<div class="m" style="left:42px;top:669px">Identification: 0x6f56 (28502)</div>
<div class="m" style="left:42px;top:686px">Flags: 0x4000, Don&#x27;t fragment</div>
<svg class="a" style="left:24px;top:684px" width="10" height="17" viewBox="0 0 10 17"><path d="M2.4 4.7L6.6 8.8L2.4 12.9" fill="none" stroke="#a0a0a0" stroke-width="1.7"/></svg>
<div class="m" style="left:42px;top:703px">Fragment offset: 0</div>
<div class="m" style="left:42px;top:720px">Time to live: 127</div>
<div class="m" style="left:42px;top:737px">Protocol: TCP (6)</div>
<div class="m" style="left:42px;top:754px">Header checksum: 0x85d7 [validation disabled]</div>
<div class="m" style="left:42px;top:771px">[Header checksum status: Unverified]</div>
<div class="m" style="left:42px;top:788px">Source: 10.100.91.100</div>
<div class="m" style="left:42px;top:805px">Destination: 157.240.2.174</div>
<div style="left:19px;top:820px;width:1261px;height:17px;background:#80b6f5;"></div>
<div class="m" style="left:22px;top:822px">Transmission Control Protocol, Src Port: 44513, Dst Port: 443, Seq: 0, Len: 0</div>
<svg class="a" style="left:4px;top:820px" width="10" height="17" viewBox="0 0 10 17"><path d="M2.4 4.7L6.6 8.8L2.4 12.9" fill="none" stroke="#a0a0a0" stroke-width="1.7"/></svg>
<div style="left:11px;top:631px;width:497px;height:56px;border:3px solid #ed1c24;box-sizing:border-box;"></div>
<div style="left:0px;top:906px;width:1281px;height:1px;background:#828282;"></div>
<div style="left:0px;top:907px;width:1281px;height:5px;background:#f0f0f0;"></div>
<div style="left:0px;top:912px;width:1281px;height:1px;background:#828282;"></div>
<div style="left:0px;top:913px;width:1281px;height:25px;background:#fff;"></div>
<div style="left:0px;top:913px;width:41px;height:25px;background:#f0f0f0;"></div>
<div class="m" style="left:6px;top:914px;color:#9a9a9a">0000</div>
<div class="m" style="left:48px;top:914px;color:#000">00 00 00 00 00 01 00 09  0f 00 03 01 08 00 45 30</div>
<div class="m" style="left:405px;top:914px;color:#000">········ ······E0</div>
<div style="left:1264px;top:913px;width:16px;height:25px;background:#f0f0f0;"></div>
<div style="left:1280px;top:912px;width:1px;height:27px;background:#828282;"></div>
<svg class="a" style="left:1264px;top:913px" width="16" height="25" viewBox="0 0 16 25"><path d="M4 9.3L7.6 5.5L11.2 9.3" fill="none" stroke="#3c3c3c" stroke-width="1.9"/><path d="M4 17.7L7.6 21.5L11.2 17.7" fill="none" stroke="#3c3c3c" stroke-width="1.9"/></svg>
<div style="left:0px;top:938px;width:1281px;height:1px;background:#828282;"></div>
<div style="left:0px;top:939px;width:1281px;height:22px;background:#f0f0f0;"></div>
<svg class="a" style="left:7px;top:942px" width="16" height="16" viewBox="0 0 16 16"><circle cx="8" cy="8" r="6.6" fill="#a7e3e1" stroke="#5b8f94" stroke-width="1"/></svg>
<svg class="a" style="left:30px;top:942px" width="17" height="17" viewBox="30 942 17 17"><rect x="31.5" y="943.5" width="11" height="13" fill="#f7f7f7" stroke="#c4c4c4" stroke-width="0.9"/><rect x="31.6" y="943.5" width="8.4" height="4.6" fill="#3795c8"/><path d="M33 946H38M35.5 943.8V948.6" stroke="#fff" stroke-width="1.5"/><path d="M33.5 951.2H35.5M33.5 954.6H41" stroke="#d4d4d4" stroke-width="0.9"/><path d="M44 944L37.2 951.4" stroke="#474747" stroke-width="2.7"/><path d="M38.2 950.2L35.3 953.2L36.2 950.9Z" fill="#2a2a2a" stroke="#2a2a2a" stroke-width="0.8"/></svg>
<div class="t" style="left:59px;top:943px;line-height:16px;font-size:11.5px;color:#000;letter-spacing:-0.212px;">Differentiated Services Field (ip.dsfield), 1 byte</div>
<div class="t" style="left:844px;top:943px;line-height:16px;font-size:11.5px;color:#000;letter-spacing:-0.209px;">Packets: 114 · Displayed: 114 (100.0%)</div>
<div class="t" style="left:1185.5px;top:943px;line-height:16px;font-size:11.5px;color:#000;letter-spacing:-0.215px;">Profile: Default</div>
<div style="left:830px;top:942px;width:1px;height:17px;background:#a0a0a0;"></div>
<div style="left:834px;top:942px;width:1px;height:17px;background:#a0a0a0;"></div>
<div style="left:1171px;top:942px;width:1px;height:17px;background:#a0a0a0;"></div>
<div style="left:1175px;top:942px;width:1px;height:17px;background:#a0a0a0;"></div>
<div style="left:1262px;top:942px;width:1px;height:17px;background:#dadada;"></div>
<div style="left:1276px;top:951px;width:2px;height:2px;background:#bcbcbc;"></div>
<div style="left:1276px;top:954px;width:2px;height:2px;background:#bcbcbc;"></div>
<div style="left:1276px;top:957px;width:2px;height:2px;background:#bcbcbc;"></div>
<div style="left:1273px;top:954px;width:2px;height:2px;background:#bcbcbc;"></div>
<div style="left:1273px;top:957px;width:2px;height:2px;background:#bcbcbc;"></div>
<div style="left:1270px;top:957px;width:2px;height:2px;background:#bcbcbc;"></div>
</body></html>
